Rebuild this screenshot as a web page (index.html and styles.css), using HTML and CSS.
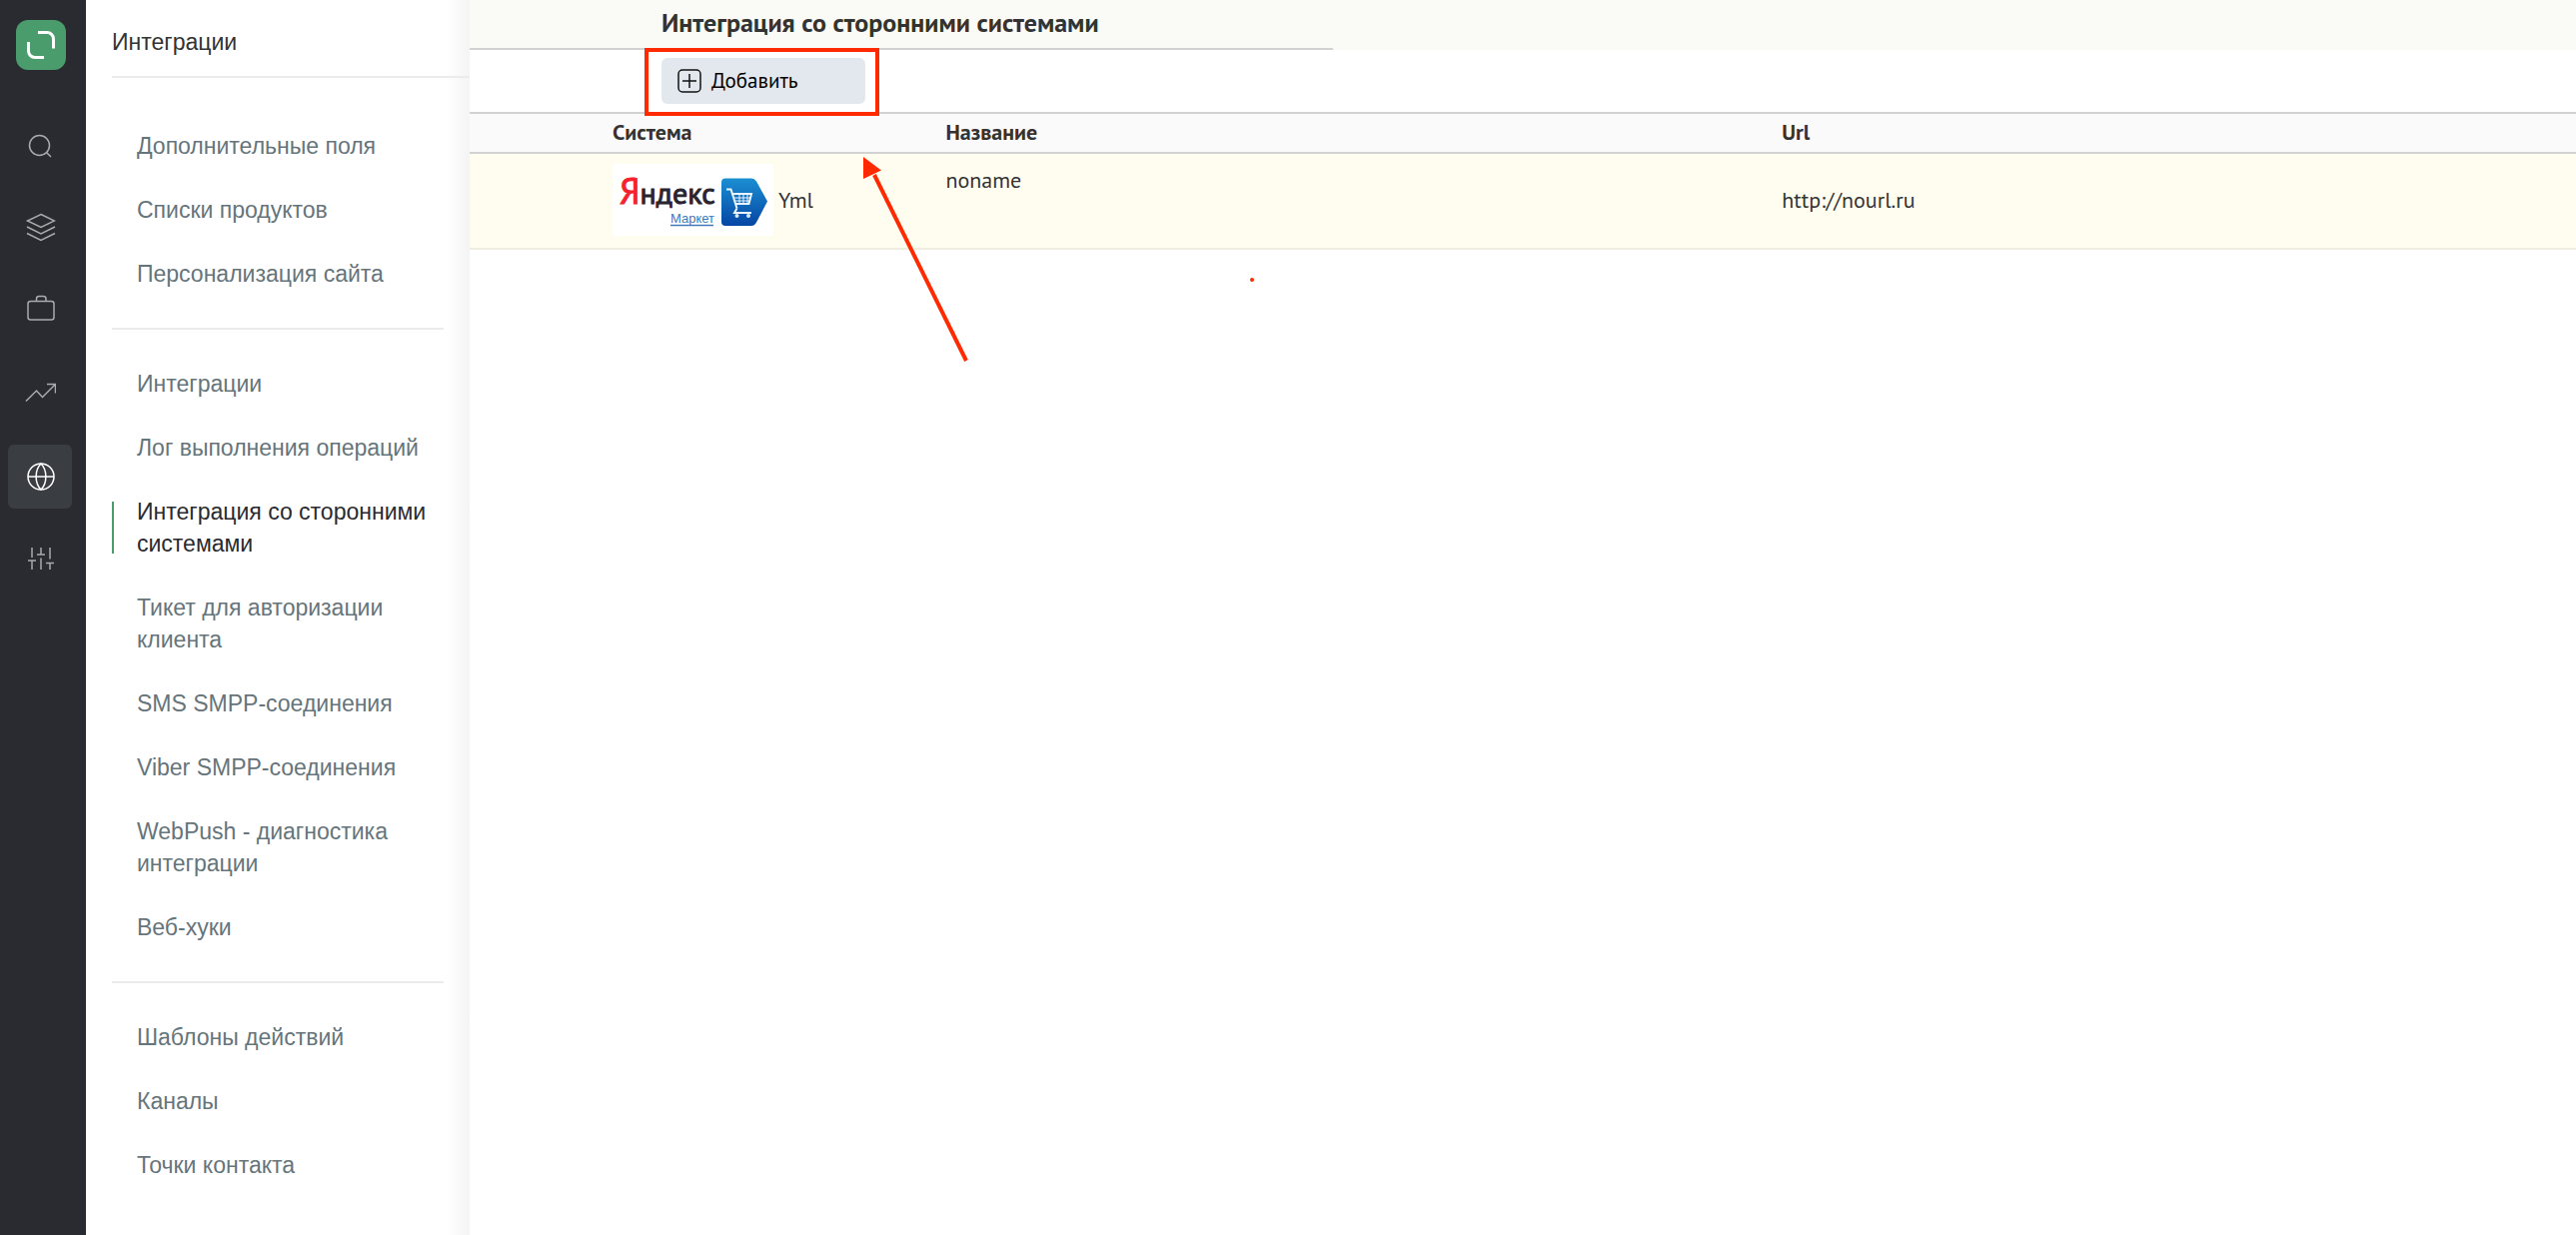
FILE: index.html
```html
<!DOCTYPE html>
<html lang="ru">
<head>
<meta charset="utf-8">
<meta name="viewport" content="width=device-width, initial-scale=1">
<title>Интеграция со сторонними системами</title>
<link rel="stylesheet" href="styles.css">
</head>
<body>
<div class="app">
  <nav class="rail" aria-label="Разделы">
    <a class="logo" href="#" aria-label="Главная">
      <svg viewBox="0 0 50 50" fill="none" stroke="#fff" stroke-width="3">
        <path d="M22 12.5h9a6.5 6.5 0 0 1 6.5 6.5v9.5"/>
        <path d="M12.5 22v9a6.5 6.5 0 0 0 6.5 6.5h9"/>
      </svg>
    </a>
    <div class="rail-items">
      <a class="rail-item" href="#" aria-label="Поиск">
        <svg viewBox="0 0 32 32"><circle cx="15.5" cy="16.5" r="10"/><path d="M22.5 23.5 27 28"/></svg>
      </a>
      <a class="rail-item" href="#" aria-label="Продукты">
        <svg viewBox="0 0 32 32"><path d="M17 2.5 30.5 9 17 15.5 3.5 9z"/><path d="M3 15l14 7 14-7M3 21.5l14 7 14-7"/></svg>
      </a>
      <a class="rail-item" href="#" aria-label="Кампании">
        <svg viewBox="0 0 32 32"><rect x="4" y="6.5" width="26" height="18.5" rx="2.5"/><path d="M12.500 6.500V4a2.500 2.500 0 0 1 2.500-2.500h4.500A2.500 2.500 0 0 1 22 4v2.500"/></svg>
      </a>
      <a class="rail-item" href="#" aria-label="Отчеты">
        <svg viewBox="0 0 32 32"><path d="M2 23.500 12.500 13l6 6.500L31.500 6.500M23 6.500h8.500V15.500"/></svg>
      </a>
      <a class="rail-item rail-item-active" href="#" aria-label="Интеграции" aria-current="page">
        <svg viewBox="0 0 32 32"><circle cx="17" cy="16" r="13"/><path d="M4 16h26"/><path d="M17 3c-6.500 6.500-6.500 19.500 0 26 6.500-6.500 6.500-19.500 0-26z"/></svg>
      </a>
      <a class="rail-item" href="#" aria-label="Настройки">
        <svg viewBox="0 0 32 32"><path d="M8 4v10M4 17h8M8 17V26M17 4v7M13 11h8M17 14.500V26M26 4v11.500M22 19.500h8M26 19.500V26"/></svg>
      </a>
    </div>
  </nav>

  <aside class="sidebar">
    <h2 class="sidebar-title">Интеграции</h2>
    <nav class="menu" aria-label="Интеграции">
      <ul class="menu-group">
        <li><a href="#">Дополнительные поля</a></li>
        <li><a href="#">Списки продуктов</a></li>
        <li><a href="#">Персонализация сайта</a></li>
      </ul>
      <ul class="menu-group">
        <li><a href="#">Интеграции</a></li>
        <li><a href="#">Лог выполнения операций</a></li>
        <li><a class="current" href="#" aria-current="page">Интеграция со сторонними системами</a></li>
        <li><a href="#">Тикет для авторизации клиента</a></li>
        <li><a href="#">SMS SMPP-соединения</a></li>
        <li><a href="#">Viber SMPP-соединения</a></li>
        <li><a href="#">WebPush - диагностика интеграции</a></li>
        <li><a href="#">Веб-хуки</a></li>
      </ul>
      <ul class="menu-group">
        <li><a href="#">Шаблоны действий</a></li>
        <li><a href="#">Каналы</a></li>
        <li><a href="#">Точки контакта</a></li>
      </ul>
    </nav>
  </aside>

  <main class="content">
    <header class="page-head"><h1 class="page-title">Интеграция со сторонними системами</h1></header>
    <div class="toolbar">
      <button class="add" type="button">
        <svg viewBox="0 0 24 24" fill="none" stroke="#111" stroke-width="1.5"><rect x="1" y="1" width="22" height="22" rx="4"/><path d="M12 5v14M5 12h14"/></svg>
        Добавить
      </button>
    </div>
    <table class="systems">
      <colgroup><col class="col-system"><col class="col-name"><col></colgroup>
      <thead>
        <tr><th scope="col">Система</th><th scope="col">Название</th><th scope="col">Url</th></tr>
      </thead>
      <tbody>
        <tr>
          <td>
            <div class="system">
              <svg class="market" viewBox="0 0 161 72" role="img" aria-label="Яндекс Маркет">
                <defs><linearGradient id="tag" x1="0" y1="0" x2="0" y2="1"><stop offset="0" stop-color="#1b8fd2"/><stop offset="1" stop-color="#0546a4"/></linearGradient></defs>
                <rect width="161" height="72" fill="#fff"/>
                <text class="market-name" x="7" y="40"><tspan class="market-ya">Я</tspan><tspan class="market-rest">ндекс</tspan></text>
                <text class="market-sub" x="58" y="59">Маркет</text>
                <path d="M58 61.500h43" stroke="#4279bd" stroke-width="1.500"/>
                <path d="M113 14.500h26q3 0 5 3l11 20-11 21q-2 3.500-5 3.500h-26q-4 0-4-4v-39.500q0-4 4-4z" fill="url(#tag)"/>
                <g fill="none" stroke="#e8f4ff" stroke-width="2"><path d="M114 25.500h4.500l6 19M120.500 30h18.500l-2.500 10h-13M124.500 44.500l-2.500 4.500h17"/><path d="M122 34h16M123 37h14M127 31v9M131 31v9M135 31v9" stroke-width="1"/></g>
                <circle cx="124.500" cy="52" r="2" fill="#d5e9fb"/><circle cx="136" cy="52" r="2" fill="#d5e9fb"/>
              </svg>
              Yml
            </div>
          </td>
          <td class="name">noname</td>
          <td>http://nourl.ru</td>
        </tr>
      </tbody>
    </table>

    <div class="mark-box"></div>
    <svg class="mark-arrow" viewBox="0 0 110 210" aria-hidden="true">
      <path d="M12 18 104 204" stroke="#ff2a00" stroke-width="4"/>
      <path d="M1 0 19 13.500 1 22z" fill="#ff2a00"/>
    </svg>
    <div class="mark-dot"></div>
  </main>
</div>
</body>
</html>
```
FILE: styles.css
```css
* {
  box-sizing: border-box;
}

body {
  margin: 0;
  background: #fff;
  color: #333;
  font: 22px/32px "PT Sans", "Noto Sans", sans-serif;
}

.app {
  display: flex;
  min-height: 100vh;
}

/* Icon rail */
.rail {
  flex: none;
  width: 86px;
  padding: 20px 0 0 8px;
  background: #2a2b30;
}

.logo {
  display: block;
  width: 50px;
  height: 50px;
  margin-left: 8px;
  border-radius: 12px;
  background: #4a9c6d;
}

.logo svg {
  display: block;
}

.rail-items {
  display: flex;
  flex-direction: column;
  gap: 19px;
  margin-top: 43px;
}

.rail-item {
  display: grid;
  place-items: center;
  width: 64px;
  height: 64px;
  border-radius: 6px;
  color: #a9abae;
}

.rail-item svg {
  width: 32px;
  height: 32px;
  fill: none;
  stroke: currentColor;
  stroke-width: 1.5;
}

.rail-item-active {
  background: #3a3d42;
  color: #fff;
}

/* Section menu */
.sidebar {
  flex: none;
  width: 384px;
  padding-left: 26px;
  background: linear-gradient(to left, #f4f4f4, #fff 24px);
  font-family: "Liberation Sans", Arial, sans-serif;
  font-size: 23px;
}

.sidebar-title {
  margin: 0;
  padding: 26px 0 18px;
  border-bottom: 2px solid #ebebeb;
  color: #333;
  font-size: 23px;
  font-weight: 400;
}

.menu {
  padding: 52px 26px 0 0;
}

.menu-group {
  display: flex;
  flex-direction: column;
  gap: 32px;
  margin: 0;
  padding: 0 0 38px;
  list-style: none;
}

.menu-group + .menu-group {
  padding-top: 38px;
  border-top: 2px solid #ebebeb;
}

.menu-group a {
  display: block;
  position: relative;
  padding-left: 25px;
  color: #66757b;
  text-decoration: none;
}

.menu-group .current {
  color: #2a2b30;
}

.menu-group .current::before {
  content: "";
  position: absolute;
  inset: 6px auto 6px 0;
  width: 2px;
  background: #4a9c6d;
}

/* Page */
.content {
  position: relative;
  flex: 1;
  min-width: 0;
}

.page-head {
  background: #fafbf7;
}

.page-title {
  width: 41%;
  margin: 0;
  padding: 7px 0 9px 192px;
  border-bottom: 2px solid #d2d2d2;
  font-size: 26px;
  line-height: 32px;
  white-space: nowrap;
}

.toolbar {
  padding: 8px 192px;
}

.add {
  display: flex;
  align-items: center;
  gap: 10px;
  width: 204px;
  height: 46px;
  padding: 0 16px;
  border: 0;
  border-radius: 6px;
  background: #e2e8ed;
  color: #000;
  font: 21px/32px "PT Sans", "Noto Sans", sans-serif;
}

.add svg {
  width: 24px;
  height: 24px;
}

.systems {
  width: 100%;
  border-collapse: collapse;
  table-layout: fixed;
}

.col-system {
  width: 22.6%;
}

.col-name {
  width: 39.7%;
}

.systems th {
  height: 40px;
  padding: 0 0 3px;
  border: solid #d2d2d2;
  border-width: 2px 0;
  background: #fafafa;
  text-align: left;
}

.systems td {
  padding: 10px 0 12px;
  border-bottom: 2px solid #eeeddf;
  background: #fffdf0;
}

.systems th:first-child,
.systems td:first-child {
  padding-left: 143px;
}

.systems .name {
  vertical-align: top;
}

.system {
  display: flex;
  align-items: center;
  gap: 5px;
}

.market {
  flex: none;
  width: 161px;
  height: 72px;
}

.market-name {
  font: 31px "PT Sans", "Noto Sans", sans-serif;
}

.market-ya {
  fill: #f5222d;
  stroke: #f5222d;
  font-size: 36px;
}

.market-rest {
  fill: #2a2430;
  stroke: #2a2430;
  stroke-width: 1;
  font-size: 30px;
}

.market-sub {
  fill: #4279bd;
  font: 13px "Liberation Sans", Arial, sans-serif;
}

/* Red annotations over the page */
.mark-box {
  position: absolute;
  top: 48px;
  left: 175px;
  width: 235px;
  height: 68px;
  border: 4px solid #ff2a00;
  pointer-events: none;
}

.mark-arrow {
  position: absolute;
  top: 157px;
  left: 393px;
  width: 110px;
  height: 210px;
  pointer-events: none;
}

.mark-dot {
  position: absolute;
  top: 278px;
  left: 781px;
  width: 4px;
  height: 4px;
  border-radius: 50%;
  background: #ff2a00;
}
```
